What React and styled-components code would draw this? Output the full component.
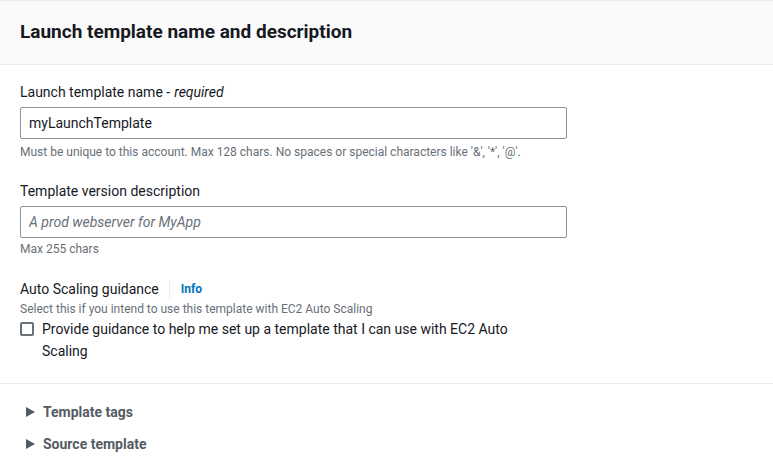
import React from "react";
import styled, { createGlobalStyle } from "styled-components";

const Global = createGlobalStyle`
  html, body { margin: 0; padding: 0; background: #ffffff; }
  body { font-family: Roboto, "Open Sans", Arial, sans-serif; color: #16191f; }
  * { box-sizing: border-box; }
`;

const Panel = styled.section`
  width: 773px;
  border-top: 1px solid #eaeded;
`;

const Header = styled.header`
  background: #fafafa;
  border-bottom: 1px solid #eaeded;
  height: 64px;
  padding: 0 20px 1px;
  display: flex;
  align-items: center;
`;

const Title = styled.h2`
  margin: 0;
  font-size: 19px;
  font-weight: 700;
  color: #16191f;
  line-height: 22px;
`;

const Body = styled.div`
  padding: 16px 20px 21px;
  display: flex;
  flex-direction: column;
  gap: 20px;
  border-bottom: 1px solid #eaeded;
`;

const Field = styled.div`
  display: flex;
  flex-direction: column;
  width: 547px;
  margin-top: ${(p) => p.$shift || 0}px;
`;

const Label = styled.label`
  font-size: 14px;
  line-height: 22px;
  color: #16191f;
  display: flex;
  align-items: center;
  em { font-style: italic; margin-left: 4px; }
`;

const Divider = styled.span`
  width: 1px;
  height: 18px;
  background: #eaeded;
  margin: 0 11px 0 10px;
`;

const InfoLink = styled.a`
  font-size: 12px;
  font-weight: 700;
  color: #0073bb;
  text-decoration: none;
`;

const Input = styled.input`
  margin-top: 4px;
  height: 32px;
  width: 547px;
  border: 1px solid #879596;
  border-radius: 2px;
  padding: 0 8px;
  font-family: inherit;
  font-size: 14px;
  color: #16191f;
  outline: none;
  &::placeholder { color: #687078; font-style: italic; }
`;

const Hint = styled.div`
  font-size: 12px;
  line-height: 16px;
  color: #687078;
  margin-top: ${(p) => (p.$top !== undefined ? p.$top : 5)}px;
`;

const CheckRow = styled.label`
  display: flex;
  align-items: flex-start;
  gap: 8px;
  margin-top: 1px;
  font-size: 14px;
  line-height: 22px;
  color: #16191f;
  width: 520px;
`;

const Box = styled.span`
  flex: none;
  width: 14px;
  height: 14px;
  margin-top: 4px;
  border: 2px solid #687078;
  border-radius: 2px;
`;

const Expanders = styled.div`
  padding: 17px 20px 0 26px;
  display: flex;
  flex-direction: column;
  gap: 10px;
`;

const Expander = styled.div`
  display: flex;
  align-items: center;
  gap: 8px;
  font-size: 14px;
  font-weight: 700;
  color: #545b64;
  line-height: 22px;
`;

const Caret = () => (
  <svg width="9" height="10" viewBox="0 0 9 10">
    <path d="M0 0 L9 5 L0 10 Z" fill="#545b64" />
  </svg>
);

export default function App() {
  return (
    <>
      <Global />
      <Panel>
        <Header>
          <Title>Launch template name and description</Title>
        </Header>
        <Body>
          <Field>
            <Label>Launch template name -<em>required</em></Label>
            <Input defaultValue="myLaunchTemplate" />
            <Hint>Must be unique to this account. Max 128 chars. No spaces or special characters like '&amp;', '*', '@'.</Hint>
          </Field>
          <Field>
            <Label>Template version description</Label>
            <Input placeholder="A prod webserver for MyApp" />
            <Hint $top={3}>Max 255 chars</Hint>
          </Field>
          <Field $shift={1}>
            <Label>
              Auto Scaling guidance<Divider /><InfoLink href="#">Info</InfoLink>
            </Label>
            <Hint $top={1}>Select this if you intend to use this template with EC2 Auto Scaling</Hint>
            <CheckRow>
              <Box />
              <span>Provide guidance to help me set up a template that I can use with EC2 Auto Scaling</span>
            </CheckRow>
          </Field>
        </Body>
        <Expanders>
          <Expander><Caret />Template tags</Expander>
          <Expander><Caret />Source template</Expander>
        </Expanders>
      </Panel>
    </>
  );
}
